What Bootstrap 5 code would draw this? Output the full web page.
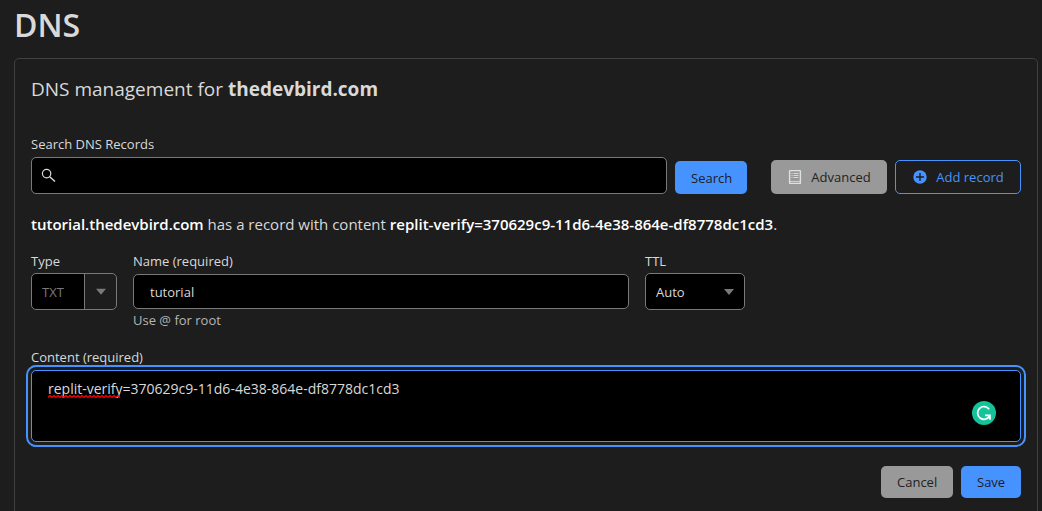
<!DOCTYPE html>
<html lang="en" data-bs-theme="dark">
<head>
<meta charset="utf-8">
<meta name="viewport" content="width=device-width, initial-scale=1">
<title>DNS</title>
<link href="https://cdn.jsdelivr.net/npm/bootstrap@5.3.0/dist/css/bootstrap.min.css" rel="stylesheet">
<style>
  :root { --blue: #4693ff; --ink: #d9d9d9; --line: #797979; --panel: #1d1d1d; }
  body { font-family: "Open Sans", "Noto Sans", sans-serif; font-size: 13px; line-height: 20px; color: var(--ink); background: var(--panel); overflow: hidden; }
  .page { padding: 4px 4px 0 14px; }
  h1, h2 { color: var(--ink); }
  h1 { font-size: 32px; line-height: 42px; font-weight: 600; margin: 0 0 12px; }
  .dns-card { background: var(--panel); border: 1px solid #404040; border-radius: 5px; padding: 16px; min-height: calc(100vh - 50px); }
  h2 { font-size: 19px; line-height: 28px; font-weight: 400; margin: 0 0 31px; }
  .field-label { display: block; line-height: 20px; margin: 0 0 3px; }
  .select-label { margin-bottom: 2px; }
  .form-control, .form-select, .form-control:focus { background-color: #000; border-color: var(--line); border-radius: 5px; color: var(--ink); font-size: 13px; line-height: 20px; box-shadow: none; }
  .form-select { height: 37px; padding: 6px 32px 6px 10px; background-image: url("data:image/svg+xml,%3Csvg xmlns='http://www.w3.org/2000/svg' width='10' height='6'%3E%3Cpath d='M0 0h10L5 6z' fill='%23797979'/%3E%3C/svg%3E"); background-size: 10px 6px; background-position: right 10px center; }
  .form-select.type-select { width: 86px; color: var(--line); opacity: 1; background-color: #000;
    background-image: url("data:image/svg+xml,%3Csvg xmlns='http://www.w3.org/2000/svg' width='32' height='36'%3E%3Cpath d='M0 0h32v36H0z' fill='%231d1d1d'/%3E%3Cpath d='M0 0h1v36H0z' fill='%23797979'/%3E%3Cpath d='M12 15h10l-5 6z' fill='%23797979'/%3E%3C/svg%3E"); background-size: 32px 36px; background-position: right center; }
  .ttl-select { width: 100px; }
  .search-input { height: 37px; padding-left: 36px; }
  .search-icon { position: absolute; left: 10px; top: 11px; }
  .name-input { height: 35px; padding: 7px 16px 6px; }
  .name-col { flex: 0 1 496px; }
  .btn { --bs-btn-font-size: 13px; --bs-btn-line-height: 20px; --bs-btn-border-radius: 5px; --bs-btn-padding-x: 15px; --bs-btn-padding-y: 6px; height: 34px; white-space: nowrap; }
  .btn-blue { --bs-btn-bg: var(--blue); --bs-btn-color: var(--panel); --bs-btn-hover-bg: #6aa8ff; height: 33px; }
  .btn-gray { --bs-btn-bg: #999; --bs-btn-color: #222; --bs-btn-hover-bg: #aaa; }
  .btn-line { --bs-btn-color: var(--blue); --bs-btn-border-color: var(--blue); --bs-btn-hover-color: var(--blue); --bs-btn-hover-border-color: var(--blue); }
  .w-search { width: 72px; } .w-advanced { width: 116px; } .w-add { width: 126px; } .w-save { width: 60px; }
  .actions .btn { height: 32px; --bs-btn-padding-y: 5px; }
  .summary { font-size: 15px; line-height: 20px; margin: 20px 0 17px; }
  .summary strong { color: #fff; font-weight: 600; }
  .hint { color: #b6b6b6; margin: 1px 0; }
  .content-input, .content-input:focus { height: 72px; padding: 8px 16px; font-size: 14px; resize: none; border-color: var(--blue); outline: 2px solid var(--blue); outline-offset: 3px; }
  .squiggle { position: absolute; left: 17px; top: 25px; width: 72px; height: 3px; background: url("data:image/svg+xml,%3Csvg xmlns='http://www.w3.org/2000/svg' width='4' height='3'%3E%3Cpath d='M0 2.5L2 .5L4 2.5' fill='none' stroke='red' stroke-width='1.3'/%3E%3C/svg%3E") repeat-x; }
  .checker { position: absolute; right: 25px; top: 31px; width: 24px; height: 24px; padding: 0; border: 0; background: none; display: block; line-height: 0; }
</style>
</head>
<body>
<main class="page">
  <h1>DNS</h1>
  <section class="dns-card">
    <h2>DNS management for <strong>thedevbird.com</strong></h2>

    <form class="d-flex align-items-end">
      <div class="flex-grow-1 me-2">
        <label class="field-label" for="search">Search DNS Records</label>
        <div class="position-relative">
          <svg class="search-icon" width="15" height="15" viewBox="0 0 15 15" fill="none" stroke="#d9d9d9" aria-hidden="true"><circle cx="5.6" cy="5.6" r="4.2" stroke-width="1.2"/><path d="M8.7 8.7L14 13.6" stroke-width="1.4"/></svg>
          <input class="form-control search-input" type="text" id="search">
        </div>
      </div>
      <button class="btn btn-blue w-search me-4" type="button">Search</button>
      <button class="btn btn-gray w-advanced me-2 d-flex align-items-center justify-content-center gap-2" type="button">
        <svg width="16" height="16" viewBox="0 0 16 16" fill="none" stroke="#e0e0e0" aria-hidden="true"><rect x="2.6" y="1.6" width="10.8" height="12.8" rx=".5" stroke-width="1.4"/><path d="M4.5 4.5h1m1 0h5M4.5 6.5h1m1 0h5M4.5 8.5h1m1 0h5" stroke-width=".9"/><path d="M3 12.4h10" stroke-width=".8"/></svg>
        Advanced
      </button>
      <button class="btn btn-line w-add d-flex align-items-center justify-content-center gap-2" type="button">
        <svg width="16" height="16" viewBox="0 0 16 16" aria-hidden="true"><circle cx="8" cy="8" r="6.7" fill="#4693ff"/><path d="M8 4v8M4 8h8" stroke="#1d1d1d" stroke-width="1.4"/></svg>
        Add record
      </button>
    </form>

    <p class="summary"><strong>tutorial.thedevbird.com</strong> has a record with content <strong>replit-verify=370629c9-11d6-4e38-864e-df8778dc1cd3</strong>.</p>

    <form>
      <div class="d-flex gap-3">
        <div>
          <label class="field-label select-label" for="type">Type</label>
          <select class="form-select type-select" id="type" disabled><option>TXT</option></select>
        </div>
        <div class="name-col">
          <label class="field-label" for="name">Name (required)</label>
          <input class="form-control name-input" type="text" id="name" value="tutorial">
          <div class="hint">Use @ for root</div>
        </div>
        <div>
          <label class="field-label select-label" for="ttl">TTL</label>
          <select class="form-select ttl-select" id="ttl"><option>Auto</option></select>
        </div>
      </div>

      <div class="mt-3">
        <label class="field-label" for="content">Content (required)</label>
        <div class="position-relative">
          <textarea class="form-control content-input" id="content" spellcheck="false">replit-verify=370629c9-11d6-4e38-864e-df8778dc1cd3</textarea>
          <span class="squiggle"></span>
          <button class="checker" type="button" aria-label="Writing check"><svg width="24" height="24" viewBox="0 0 24 24"><circle cx="12" cy="12" r="12" fill="#15c39a"/><path d="M17.2 8.2A6.4 6.4 0 1 0 17.6 15M13 14.4h5v4.4" fill="none" stroke="#fff" stroke-width="1.7"/></svg></button>
        </div>
      </div>

      <div class="actions d-flex justify-content-end gap-2 mt-4">
        <button class="btn btn-gray w-search" type="button">Cancel</button>
        <button class="btn btn-blue w-save" type="button">Save</button>
      </div>
    </form>
  </section>
</main>
<script src="https://cdn.jsdelivr.net/npm/bootstrap@5.3.0/dist/js/bootstrap.bundle.min.js"></script>
</body>
</html>
